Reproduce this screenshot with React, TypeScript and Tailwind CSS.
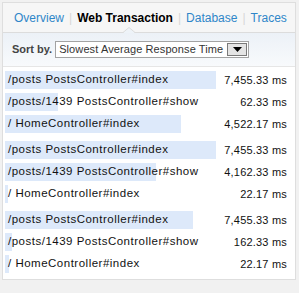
const groups = [
  [
    { label: '/posts PostsController#index', value: '7,455.33 ms', bar: 211 },
    { label: '/posts/1439 PostsController#show', value: '62.33 ms', bar: 53 },
    { label: '/ HomeController#index', value: '4,522.17 ms', bar: 176 },
  ],
  [
    { label: '/posts PostsController#index', value: '7,455.33 ms', bar: 211 },
    { label: '/posts/1439 PostsController#show', value: '4,162.33 ms', bar: 151 },
    { label: '/ HomeController#index', value: '22.17 ms', bar: 3 },
  ],
  [
    { label: '/posts PostsController#index', value: '7,455.33 ms', bar: 188 },
    { label: '/posts/1439 PostsController#show', value: '162.33 ms', bar: 7 },
    { label: '/ HomeController#index', value: '22.17 ms', bar: 4 },
  ],
];

export default function App() {
  return (
    <div
      className="w-[299px] h-[293px] bg-[#f1f1f1] pt-[2px] pl-[2px] text-[11px] text-[#111] whitespace-nowrap"
      style={{ fontFamily: '"Liberation Sans", Arial, sans-serif' }}
    >
      <div className="w-[294px] h-[278px] border border-[#dedede] bg-white">
        {/* Tabs */}
        <div className="relative h-[30px] bg-[#f6f6f6] border-b border-[#dcdcdc] flex items-center pl-[11px] pt-[1px] text-[12px]">
          <span className="text-[#2f86c9]">Overview</span>
          <span className="mx-[5px] text-[#d6d6d6]">|</span>
          <span className="font-bold text-black">Web Transaction</span>
          <span className="mx-[5px] text-[#d6d6d6]">|</span>
          <span className="text-[#2f86c9]">Database</span>
          <span className="mx-[5px] text-[#d6d6d6]">|</span>
          <span className="text-[#2f86c9]">Traces</span>
          <svg className="absolute left-[120px] -bottom-[1px]" width="12" height="6" viewBox="0 0 12 6">
            <path d="M0 6 L6 0 L12 6 Z" fill="#eef3f8" />
            <path d="M0 5.5 L6 0.5 L12 5.5" fill="none" stroke="#dcdcdc" strokeWidth="1" />
          </svg>
        </div>

        {/* Sort bar */}
        <div className="h-[34px] bg-gradient-to-b from-[#ecf1f7] to-[#f8fafc] border-b border-[#e6e6e6] flex items-center pl-[9px]">
          <span className="font-bold text-[#444] mr-[3px]">Sort by.</span>
          <div className="w-[194px] h-[17px] bg-white border border-[#a3a3a3] flex items-center justify-between pl-[3px] pr-[1px]">
            <span className="text-[#333] tracking-[0.1px]">Slowest Average Response Time</span>
            <div className="w-[20px] h-[13px] bg-[#e4e4e4] border border-[#7a7a7a] flex items-center justify-center">
              <svg width="9" height="5" viewBox="0 0 9 5">
                <path d="M0 0 L9 0 L4.5 5 Z" fill="#000" />
              </svg>
            </div>
          </div>
        </div>

        {/* Rows */}
        <div className="pt-[4px] px-[2px] flex flex-col gap-[8px]">
          {groups.map((rows, gi) => (
            <div key={gi} className="flex flex-col gap-[4px]">
              {rows.map((row, ri) => (
                <div key={ri} className="relative h-[18px] flex items-center justify-between pl-[3px] pr-[6px]">
                  <div className="absolute left-0 top-0 h-full bg-[#dde9fa]" style={{ width: row.bar }} />
                  <span className="relative text-[11.5px] tracking-[0.5px]">{row.label}</span>
                  <span className="relative tracking-[0.2px]">{row.value}</span>
                </div>
              ))}
            </div>
          ))}
        </div>
      </div>
    </div>
  );
}
